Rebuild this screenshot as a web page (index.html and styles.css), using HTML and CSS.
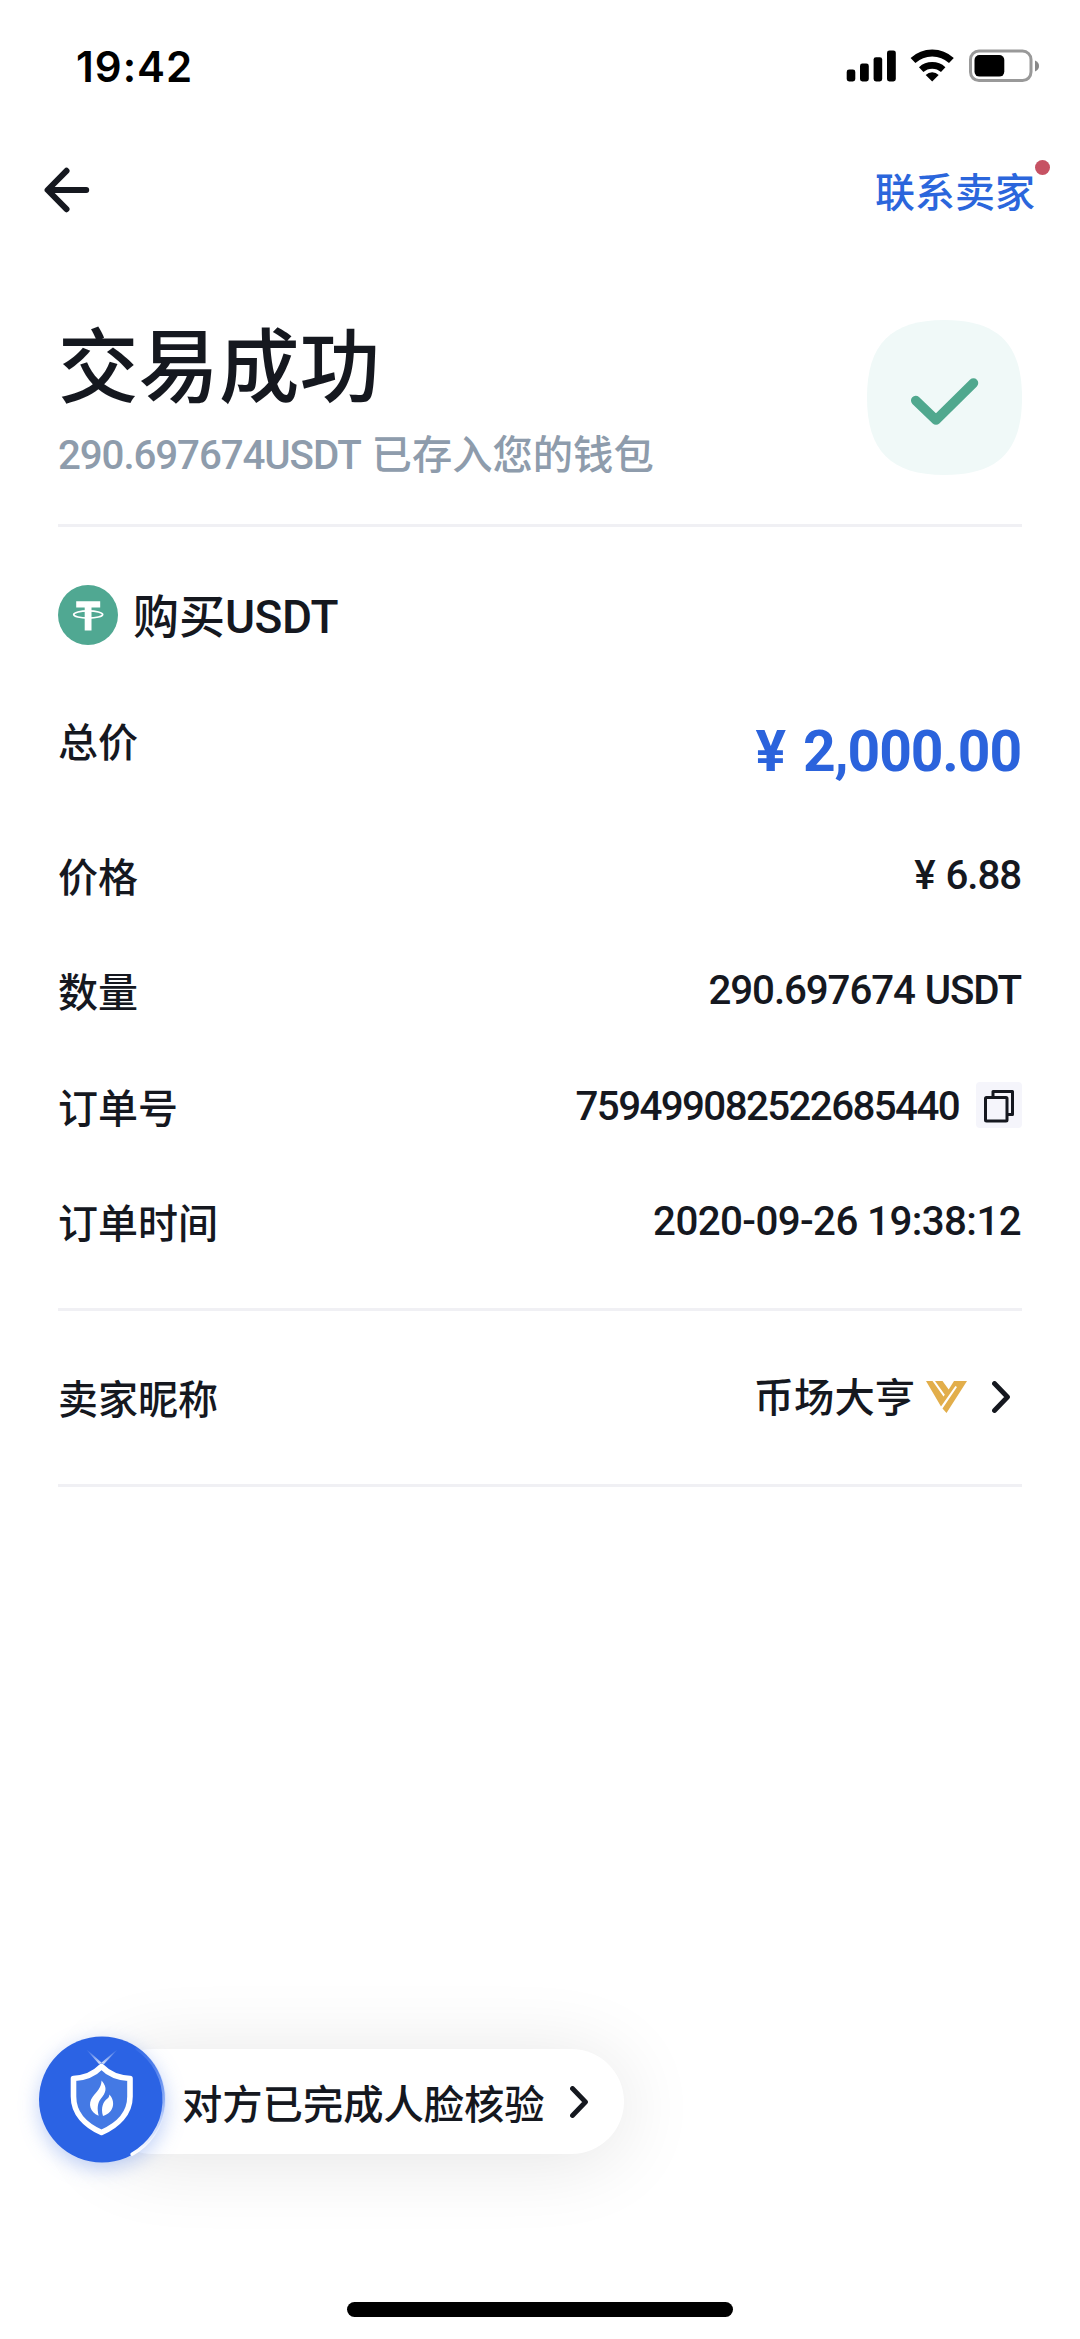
FILE: index.html
```html
<!DOCTYPE html>
<html lang="zh-CN">
<head>
<meta charset="utf-8">
<title>交易成功</title>
<link rel="stylesheet" href="styles.css">
</head>
<body>
<div class="screen">
  <header class="status">
    <span class="clock">19:42</span>
    <svg class="status-icons" width="194" height="34" viewBox="0 0 194 34">
      <rect x="0.7" y="20.5" width="8.6" height="12" rx="2.4"/>
      <rect x="14" y="14.6" width="8.8" height="17.9" rx="2.4"/>
      <rect x="27.6" y="8.2" width="8.6" height="24.3" rx="2.4"/>
      <rect x="41" y="1.4" width="8.8" height="31.1" rx="2.4"/>
      <g fill="none" stroke="#000">
        <path d="M67 11.500a28 28 0 0 1 38.400 0" stroke-width="7"/>
        <path d="M75.200 20.600a16.400 16.400 0 0 1 22 0" stroke-width="6.600"/>
      </g>
      <path d="M86.200 32.400l-6.500-6.500a9.600 9.600 0 0 1 13 0z"/>
      <rect x="124.500" y="2" width="60.500" height="29.600" rx="8.500" fill="none" stroke="#999" stroke-width="3"/>
      <rect x="128.500" y="6" width="29.800" height="21.600" rx="5"/>
      <path d="M189 11.500c5.400 2.200 5.400 8.800 0 11z" fill="#888"/>
    </svg>
  </header>

  <nav class="nav">
    <svg class="back" width="48" height="48" viewBox="0 0 48 48"><path d="M24.500 4.800L5.600 24l18.900 19.200M6 24h38.200"/></svg>
    <a class="contact">联系卖家<i class="dot"></i></a>
  </nav>

  <section class="result">
    <div class="result-text">
      <h1>交易成功</h1>
      <p><span class="amount">290.697674USDT</span>已存入您的钱包</p>
    </div>
    <svg class="badge" width="155" height="155" viewBox="0 0 155 155">
      <path class="badge-bg" d="M77.500 0C131 0 155 24 155 77.500S131 155 77.500 155 0 131 0 77.500 24 0 77.500 0z"/>
      <path class="badge-tick" d="M48.700 80.500L69 100 106.500 63"/>
    </svg>
  </section>

  <section class="order">
    <h2 class="coin">
      <svg width="60" height="60" viewBox="0 0 60 60">
        <circle cx="30" cy="30" r="30" fill="#50a892"/>
        <path d="M18.200 16.300h24v6.200h-8.700v23h-6.800v-23h-8.500z" fill="#fff"/>
        <ellipse cx="30.200" cy="29.500" rx="14.500" ry="3.600" fill="none" stroke="#fff" stroke-width="1.700"/>
      </svg>
      <span>购买<span class="din">USDT</span></span>
    </h2>
    <dl>
      <div class="row total"><dt>总价</dt><dd>¥ 2,000.00</dd></div>
      <div class="row"><dt>价格</dt><dd class="unit">¥ 6.88</dd></div>
      <div class="row"><dt>数量</dt><dd class="qty">290.697674 USDT</dd></div>
      <div class="row"><dt>订单号</dt><dd class="number">759499082522685440<span class="copy"><svg width="46" height="46" viewBox="0 0 46 46"><path d="M17 14V9.500h19.500v23H32"/><rect x="9.500" y="15.500" width="21.500" height="23.500" rx="1"/></svg></span></dd></div>
      <div class="row"><dt>订单时间</dt><dd class="time">2020-09-26 19:38:12</dd></div>
    </dl>
  </section>

  <section class="seller">
    <span class="seller-label">卖家昵称</span>
    <span class="seller-name"><span class="nick">币场大亨</span>
      <svg class="vip" width="42" height="32" viewBox="0 0 42 32"><path d="M0 0h6.500L17.500 15.500l1.300-1.800L9 0h7.500l6.200 8.500L28 0H41L20.500 32l-4-4.500L31 6l-1.600-1L15 25.500z"/></svg>
      <svg class="chev" width="18" height="32" viewBox="0 0 18 32"><path d="M2.500 2.500L15.500 16 2.500 29.500"/></svg>
    </span>
  </section>

  <a class="verify">
    <svg class="shield" width="150" height="150" viewBox="0 0 150 150">
      <defs>
        <linearGradient id="ray" x1="0" y1="1" x2="0" y2="0"><stop offset="0" stop-color="#fff" stop-opacity=".8"/><stop offset=".8" stop-color="#fff" stop-opacity="0"/></linearGradient>
        <linearGradient id="rim" x1="0" y1="1" x2="0" y2="0"><stop offset="0" stop-color="#fff"/><stop offset=".35" stop-color="#dfe9ff" stop-opacity=".8"/><stop offset="1" stop-color="#9dbcff" stop-opacity=".1"/></linearGradient>
      </defs>
      <circle cx="72" cy="73.500" r="63" fill="#2b63e4"/>
      <path d="M102 128.200A62 62 0 0 0 107 22.500" fill="none" stroke="url(#rim)" stroke-width="3.400" stroke-linecap="round"/>
      <path d="M72 37L53 20l16 18zM71 37L91 20 74 38z" fill="url(#ray)"/>
      <path d="M71.500 40.500c-7 7.200-16.500 11.500-28 12v18c0 17 12 29 28 36 16-7 28.500-19 28.500-36v-18c-11.500-.5-21.500-4.800-28.500-12z" fill="#4479e4" stroke="#fff" stroke-width="5.600" stroke-linejoin="round"/>
      <path d="M71.600 54.500c6.500 7.500 4 12.500-.6 18-3.600 4.500-4 10-2.400 17.200-8.600-3.400-11-12-6-18.700 4-5.200 8.500-8.700 9-16.500z" fill="#fff"/>
      <path d="M79.300 68.500c6.200 6.200 5.500 18-6.300 21.500-2.500-8.500.3-14.500 4.500-17.500 1.300-1 1.800-2.300 1.800-4z" fill="#fff"/>
    </svg>
    <span>对方已完成人脸核验</span>
    <svg class="chev" width="18" height="32" viewBox="0 0 18 32"><path d="M2.500 2.500L15.500 16 2.500 29.500"/></svg>
  </a>
  <div class="home"></div>
</div>
</body>
</html>
```
FILE: styles.css
```css
* { box-sizing: border-box; margin: 0; padding: 0; }
body { background: #fff; color: #15181f; font-family: Roboto, "Noto Sans CJK SC", sans-serif; font-weight: 500; font-size: 40.3px; }
svg { display: block; flex: none; }
.screen { height: 2339px; display: flex; flex-direction: column; overflow: hidden; }

.status { height: 134px; display: flex; justify-content: space-between; padding: 49px 40px 0 76px; color: #000; }
.clock { font: 600 42px/36px Inter, sans-serif; letter-spacing: 1px; }

.nav { height: 112px; display: flex; justify-content: space-between; align-items: center; padding: 0 45px 0 42px; }
.back path { fill: none; stroke: #15181f; stroke-width: 6; stroke-linecap: round; stroke-linejoin: round; }
.contact { position: relative; color: #2b66dc; line-height: 58px; font-size: 40px; padding-top: 7px; }
.dot { position: absolute; right: -15px; top: 2px; width: 15px; height: 15px; border-radius: 50%; background: #c65263; }

.result { margin: 0 58px; height: 281px; padding-top: 74px; display: flex; justify-content: space-between; border-bottom: 3px solid #f0f0f4; }
h1 { font-size: 80.500px; font-weight: 500; line-height: 92px; padding-top: 3px; }
.result p { line-height: 58px; color: #8e9cac; margin-top: 12px; }
.amount { letter-spacing: -1.100px; margin-right: 11px; }
.badge-bg { fill: #f0f9f8; }
.badge-tick { fill: none; stroke: #50a88e; stroke-width: 9.500; stroke-linecap: round; stroke-linejoin: round; }

.order { margin: 0 58px; height: 784px; padding-top: 58px; border-bottom: 3px solid #f0f0f4; }
.coin { display: flex; align-items: center; gap: 15px; height: 60px; font-size: 46px; font-weight: 500; line-height: 60px; }
.coin > span { padding-top: 4px; }
.coin .din { letter-spacing: -.500px; }
dl { margin-top: 60px; }
.row { display: flex; justify-content: space-between; align-items: center; height: 115.300px; line-height: 58px; }
dt, .seller-label { font-size: 40px; }
dt { padding-top: 3px; }
dd { letter-spacing: -1.100px; padding: 0 1px 3px 0; }
.total { height: 115px; align-items: flex-start; padding-top: 7px; }
.total dd { color: #2b63dc; font-size: 57px; font-weight: 700; letter-spacing: -1.100px; word-spacing: 5px; padding-top: 11px; }
.unit { word-spacing: 2px; }
.qty { word-spacing: 1px; }
.time { letter-spacing: -.600px; }
.number { display: flex; align-items: center; letter-spacing: -1.600px; padding-right: 0; }
.copy { margin: -3px 0 0 17px; border-radius: 4px; background: #f5f5fb; }
.copy path, .copy rect { fill: none; stroke: #15181f; stroke-width: 3; stroke-linejoin: round; }

.seller { margin: 0 58px; height: 176px; display: flex; justify-content: space-between; align-items: center; border-bottom: 3px solid #f0f0f4; }
.seller-label { padding-bottom: 1px; }
.seller-name { display: flex; align-items: center; padding: 0 12px 2px 0; }
.nick { padding-bottom: 5px; }
.vip { margin: 0 24px 0 11px; fill: #e2ae4b; }
.chev path { fill: none; stroke: #15181f; stroke-width: 4.800; stroke-linecap: round; stroke-linejoin: round; }

.verify { position: relative; display: flex; align-items: center; width: 524px; height: 105px; margin: 562px 0 0 100px; padding-left: 82px; border-radius: 53px; background: #fff; box-shadow: 0 6px 80px rgba(0,0,0,.11); }
.verify > span { padding-bottom: 1px; }
.verify .chev { margin-left: 25px; }
.shield { position: absolute; left: -70px; top: -23px; overflow: visible; filter: drop-shadow(0 6px 10px rgba(43,99,228,.3)); }
.home { width: 386px; height: 15px; border-radius: 8px; background: #000; margin: 148px 0 0 347px; }
```
